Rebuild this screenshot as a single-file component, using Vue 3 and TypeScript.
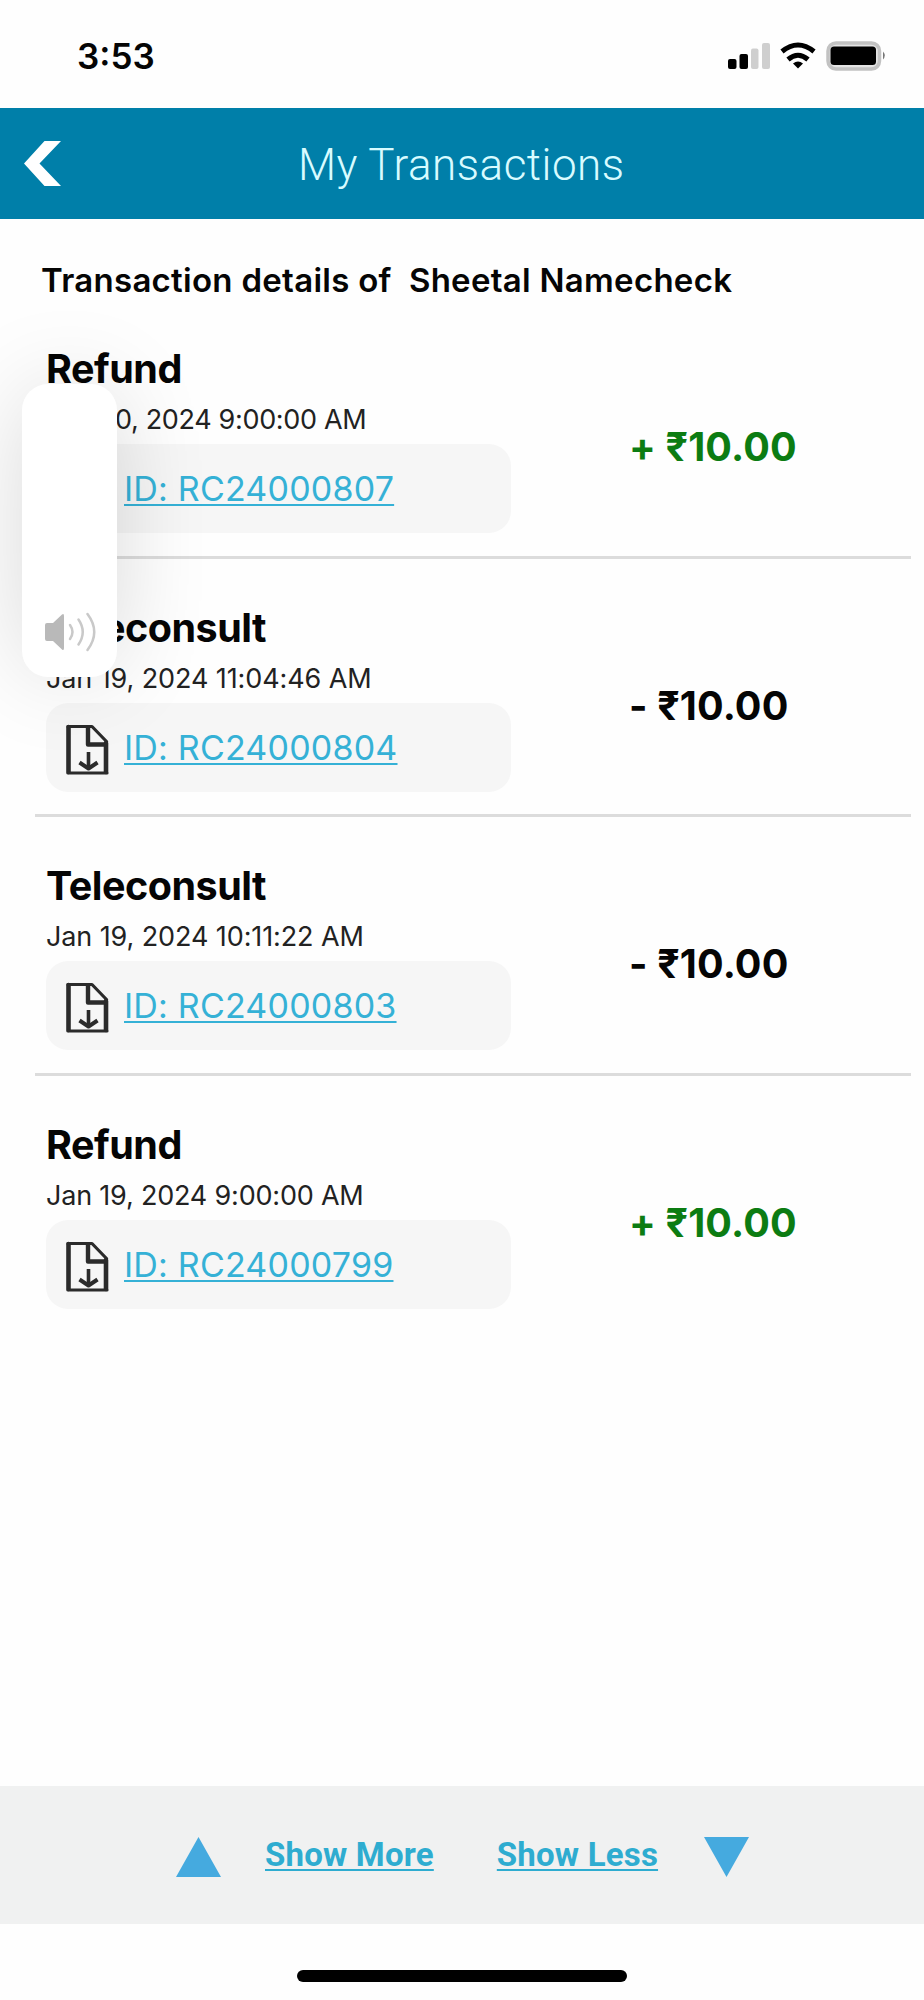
<script setup lang="ts">
interface Transaction {
  kind: string
  date: string
  id: string
  amount: string
  credit: boolean
}

const transactions: Transaction[] = [
  { kind: 'Refund', date: 'Jan 20, 2024 9:00:00 AM', id: 'RC24000807', amount: '+ ₹10.00', credit: true },
  { kind: 'Teleconsult', date: 'Jan 19, 2024 11:04:46 AM', id: 'RC24000804', amount: '- ₹10.00', credit: false },
  { kind: 'Teleconsult', date: 'Jan 19, 2024 10:11:22 AM', id: 'RC24000803', amount: '- ₹10.00', credit: false },
  { kind: 'Refund', date: 'Jan 19, 2024 9:00:00 AM', id: 'RC24000799', amount: '+ ₹10.00', credit: true },
]
</script>

<template>
  <main class="screen">
    <div class="status-bar">
      <span class="clock">3:53</span>
      <svg class="status-icons" width="160" height="32" viewBox="726 40 160 32">
        <rect x="728" y="59" width="8.5" height="10" rx="2" />
        <rect x="739.5" y="54" width="8.5" height="15" rx="2" />
        <rect x="751" y="48.5" width="7.5" height="20.5" rx="2" fill="#cfcfcf" />
        <rect x="762" y="43" width="8" height="26" rx="2" fill="#cfcfcf" />
        <g fill="none" stroke="#000" stroke-width="5">
          <path d="M782 51.500 Q798 38.500 814 51.500" />
          <path d="M788 59.500 Q798 51 808 59.500" />
        </g>
        <path d="M793 63.500 Q798 59.500 803 63.500 L798 68.500 Z" />
        <rect x="828" y="43" width="51.500" height="26" rx="8" fill="#e4e4e4" stroke="#c2c2c2" stroke-width="3.500" />
        <rect x="830.500" y="46.500" width="45.500" height="18.500" rx="3.500" />
        <path d="M883 51.500 Q886.500 55.500 883 59.500 Z" fill="#777" />
      </svg>
    </div>

    <header class="nav-bar">
      <svg class="back" width="37" height="45" viewBox="0 0 37 45"><path d="M20.500 0H37L15.500 22.500L37 45H20.500L0 22.500Z" fill="#fff" /></svg>
      <h1>My Transactions</h1>
    </header>

    <h2 class="subtitle">Transaction details of&nbsp; Sheetal Namecheck</h2>

    <section class="list">
      <article v-for="tx in transactions" :key="tx.id" class="row">
        <div class="info">
          <h3>{{ tx.kind }}</h3>
          <p class="date">{{ tx.date }}</p>
          <div class="receipt">
            <svg class="file" width="46" height="52" viewBox="0 0 46 52" fill="none" stroke="#2b2b2b" stroke-linejoin="round">
              <path d="M4.500 4V49M42 20V49" stroke-width="4.600" stroke-linecap="round" />
              <path d="M4 3.500H28L42.500 18.500M4 50H43" stroke-width="3.200" stroke-linecap="round" />
              <path d="M24 4V21.500H42" stroke-width="4.400" />
              <path d="M24.500 29V44" stroke-width="3.600" />
              <path d="M15.500 39.500L24.500 45.500L33.500 39.500" stroke-width="4" />
            </svg>
            <a>ID: {{ tx.id }}</a>
          </div>
        </div>
        <p class="amount" :class="{ credit: tx.credit }">{{ tx.amount }}</p>
      </article>
    </section>

    <footer class="pager">
      <svg class="up" width="45" height="40" viewBox="0 0 45 40"><path d="M22.500 0L45 40H0Z" fill="#45aadf" /></svg>
      <a class="more">Show More</a>
      <a class="less">Show Less</a>
      <svg class="down" width="45" height="40" viewBox="0 0 45 40"><path d="M0 0H45L22.500 40Z" fill="#45aadf" /></svg>
    </footer>
    <div class="home-area"><div class="home-bar"></div></div>

    <div class="volume">
      <svg width="54" height="40" viewBox="0 0 54 40">
        <path d="M1 13Q1 11 3 11H9L18 2.500Q20 1 20 4V36Q20 39 18 37.500L9 29H3Q1 29 1 27Z" fill="#b9b9b9" />
        <g fill="none" stroke="#c9c9c9" stroke-width="2.500" stroke-linecap="round">
          <path d="M26 13Q31 20 26 27" />
          <path d="M34.500 7.500Q43 20 34.500 32.500" />
          <path d="M43.500 2Q57 20 43.500 38" />
        </g>
      </svg>
    </div>
  </main>
</template>

<style>
body { margin: 0; background: #fff; }
</style>

<style scoped>
.screen { position: relative; width: 924px; height: 2000px; overflow: hidden; display: flex; flex-direction: column; background: #fefefe; color: #050505; font-family: Inter, "Liberation Sans", sans-serif; }
h1, h2, h3, p { margin: 0; }
.status-bar { height: 108px; display: flex; justify-content: space-between; align-items: flex-start; box-sizing: border-box; padding: 36px 38px 0 77px; }
.clock { font-size: 35px; line-height: 40px; font-weight: 600; }
.status-icons { margin-top: 4px; }
.nav-bar { height: 111px; box-sizing: border-box; background: #007fa9; display: flex; align-items: center; padding-left: 24px; }
h1 { margin: 3px 0 0 237px; font-family: Roboto, sans-serif; font-weight: 300; font-size: 44px; line-height: 60px; letter-spacing: 0.500px; color: #d8fbff; white-space: nowrap; }
.subtitle { padding: 41px 0 0 41px; height: 40px; font-size: 33px; line-height: 40px; font-weight: 600; letter-spacing: 0.280px; white-space: nowrap; }
.list { flex: 1; padding: 0 13px 0 35px; }
.row { height: 258.700px; box-sizing: border-box; display: flex; align-items: flex-start; padding-left: 11px; border-bottom: 3px solid #dcdcdc; }
.row:last-child { border-bottom: 0; }
.info { width: 465px; padding-top: 46px; }
h3 { font-size: 39.500px; line-height: 46px; font-weight: 700; letter-spacing: -0.500px; }
.date { margin-top: 10px; font-size: 27px; line-height: 36px; letter-spacing: -0.100px; color: #222; white-space: nowrap; }
.row:first-child .date { letter-spacing: -0.330px; }
.row:last-child .date { letter-spacing: -0.200px; }
.receipt { margin-top: 6px; height: 89px; box-sizing: border-box; padding-left: 18px; border-radius: 22px; background: #f6f6f6; display: flex; align-items: center; gap: 14px; }
.file { margin-top: 3px; }
.receipt a { margin-top: 1px; font-size: 34px; line-height: 44px; letter-spacing: 0.200px; color: #35b1d6; text-decoration: underline; text-decoration-thickness: 2px; text-underline-offset: 3px; text-decoration-skip-ink: none; white-space: nowrap; }
.amount { margin: 123px 0 0 118px; font-size: 39.500px; line-height: 48px; font-weight: 700; letter-spacing: 0.150px; white-space: nowrap; }
.credit { color: #0c7c12; }
.pager { height: 138px; background: #f0f1f1; display: flex; align-items: flex-start; padding-left: 176px; }
.pager svg { margin-top: 51px; }
.pager a { margin-top: 49px; font-family: Roboto, sans-serif; font-weight: 700; font-size: 33px; line-height: 40px; letter-spacing: 0.200px; color: #2eacd0; text-decoration: underline; text-decoration-thickness: 2px; text-underline-offset: 3px; text-decoration-skip-ink: none; }
.more { margin-left: 44px; }
.less { margin-left: 63px; }
.down { margin-left: 46px; }
.home-area { height: 76px; display: flex; justify-content: center; align-items: flex-start; }
.home-bar { margin-top: 46px; width: 330px; height: 12px; border-radius: 6px; background: #000; }
.volume { position: absolute; left: 22px; top: 384px; width: 95px; height: 293px; border-radius: 26px; background: #fff; box-shadow: 0 0 100px -12px rgba(0, 0, 0, 0.200); }
.volume svg { display: block; margin: 228px 0 0 22px; }
</style>
